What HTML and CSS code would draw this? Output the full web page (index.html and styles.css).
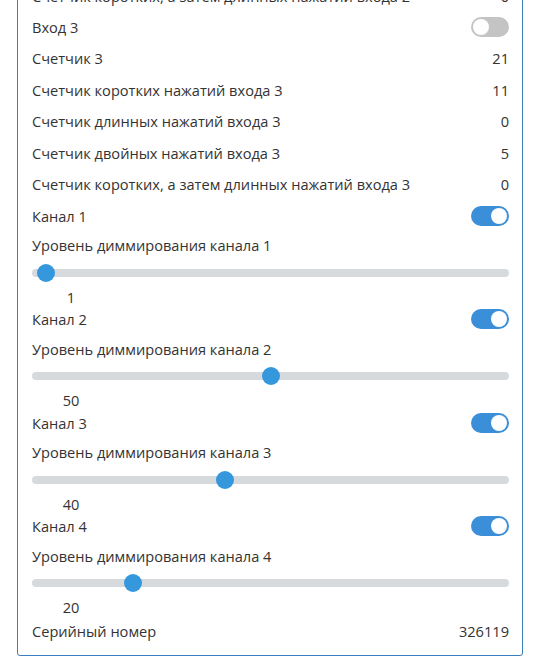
FILE: index.html
```html
<!DOCTYPE html>
<html lang="ru">
<head>
<meta charset="utf-8">
<title>Устройство</title>
<link rel="stylesheet" href="styles.css">
</head>
<body>
<div class="card">
  <div class="row"><span>Счетчик коротких, а затем длинных нажатий входа 2</span><span>0</span></div>
  <div class="row"><span>Вход 3</span><span class="toggle"></span></div>
  <div class="row"><span>Счетчик 3</span><span>21</span></div>
  <div class="row"><span>Счетчик коротких нажатий входа 3</span><span>11</span></div>
  <div class="row"><span>Счетчик длинных нажатий входа 3</span><span>0</span></div>
  <div class="row"><span>Счетчик двойных нажатий входа 3</span><span>5</span></div>
  <div class="row"><span>Счетчик коротких, а затем длинных нажатий входа 3</span><span>0</span></div>

  <div class="channels">
    <div class="channel">
      <div class="row ch"><span>Канал 1</span><span class="toggle on"></span></div>
      <div class="label">Уровень диммирования канала 1</div>
      <div class="slider"><input type="range" min="0" max="100" value="1"></div>
      <div class="value">1</div>
    </div>
    <div class="channel">
      <div class="row ch"><span>Канал 2</span><span class="toggle on"></span></div>
      <div class="label">Уровень диммирования канала 2</div>
      <div class="slider"><input type="range" min="0" max="100" value="50"></div>
      <div class="value">50</div>
    </div>
    <div class="channel">
      <div class="row ch"><span>Канал 3</span><span class="toggle on"></span></div>
      <div class="label">Уровень диммирования канала 3</div>
      <div class="slider"><input type="range" min="0" max="100" value="40"></div>
      <div class="value">40</div>
    </div>
    <div class="channel">
      <div class="row ch"><span>Канал 4</span><span class="toggle on"></span></div>
      <div class="label">Уровень диммирования канала 4</div>
      <div class="slider"><input type="range" min="0" max="100" value="20"></div>
      <div class="value">20</div>
    </div>
  </div>

  <div class="row serial"><span>Серийный номер</span><span>326119</span></div>
</div>
</body>
</html>
```

FILE: styles.css
```css
html, body {
  margin: 0;
  padding: 0;
  background: #ffffff;
  overflow: hidden;
}
body {
  font-family: "Open Sans", "Noto Sans", sans-serif;
  font-size: 14.6px;
  color: #333333;
}
.card {
  width: 506px;
  box-sizing: border-box;
  margin: -21px 0 0 17px;
  border: 1px solid #3b7fc3;
  border-radius: 0 0 3px 3px;
  padding: 0 13px 7px 14px;
}
.channels {
  padding-top: 1px;
}
.row {
  display: flex;
  align-items: center;
  justify-content: space-between;
  height: 31.4px;
}
.row.ch {
  height: 30px;
}
.row.serial {
  height: 33px;
}
.label {
  height: 29px;
  display: flex;
  align-items: center;
}
.slider {
  height: 26px;
  display: flex;
  align-items: center;
}
.value {
  height: 18.5px;
  line-height: 22px;
  width: 78px;
  text-align: center;
}
.toggle {
  width: 38px;
  height: 20px;
  border-radius: 10px;
  background: #c4c4c4;
  display: flex;
  align-items: center;
  padding: 0 2px;
  box-sizing: border-box;
}
.toggle::after {
  content: "";
  width: 16px;
  height: 16px;
  border-radius: 50%;
  background: #ffffff;
}
.toggle.on {
  background: #3a8fd8;
  justify-content: flex-end;
}
input[type="range"] {
  -webkit-appearance: none;
  appearance: none;
  width: 100%;
  margin: 0;
  height: 18px;
  background: transparent;
}
input[type="range"]::-webkit-slider-runnable-track {
  height: 8px;
  border-radius: 4px;
  background: #d7dadd;
}
input[type="range"]::-webkit-slider-thumb {
  -webkit-appearance: none;
  appearance: none;
  width: 18px;
  height: 18px;
  border-radius: 50%;
  background: #3597dc;
  border: none;
  margin-top: -5px;
}
```
